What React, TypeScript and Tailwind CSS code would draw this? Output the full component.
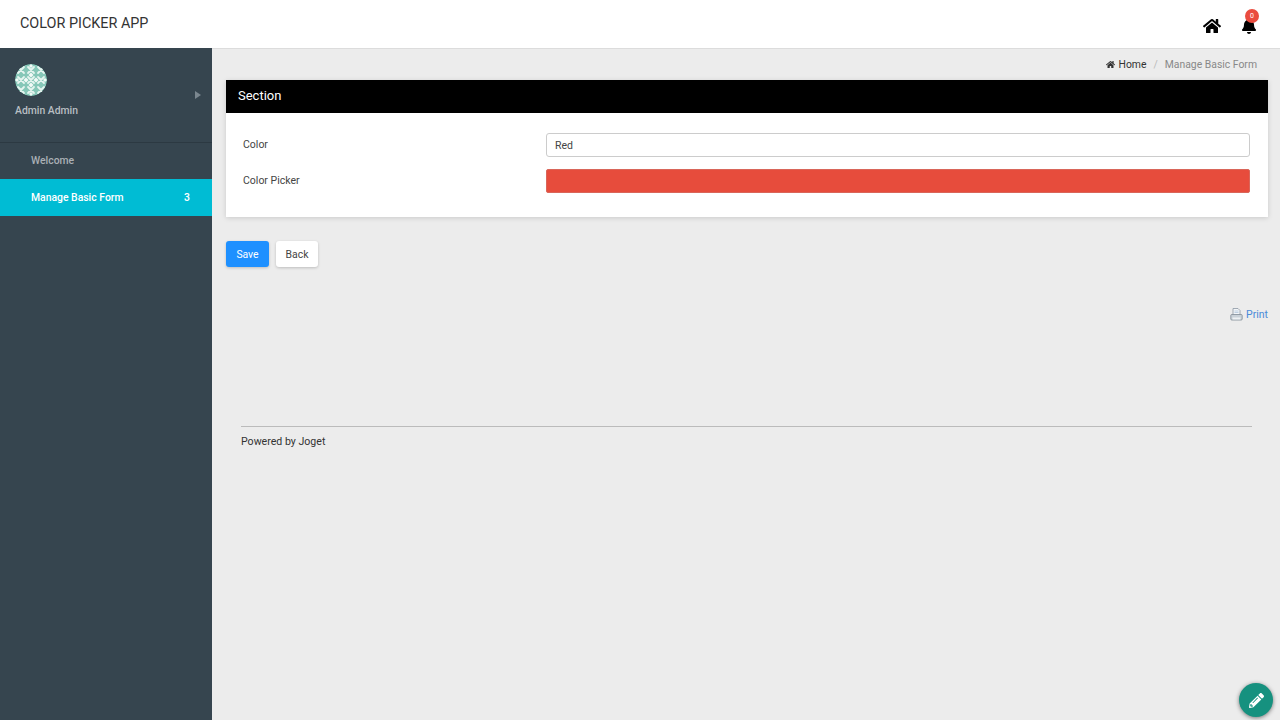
import { FaBell, FaHome, FaPencilAlt } from "react-icons/fa";

const tiles = [6, 16, 26];

const Avatar = () => (
  <svg width="32" height="32" viewBox="0 0 32 32" className="block rounded-full">
    <circle cx="16" cy="16" r="16" fill="#86c7b8" />
    {tiles.map((y) =>
      tiles.map((x) => (
        <g key={`${x}-${y}`} stroke="#e6f4f0" strokeWidth="1.8" strokeLinecap="round">
          <path d={`M${x - 3} ${y - 3}L${x + 3} ${y + 3}M${x + 3} ${y - 3}L${x - 3} ${y + 3}`} />
        </g>
      )),
    )}
    <g fill="#f2faf7">
      <path d="M16 8.500l2.500 2.500-2.500 2.500-2.500-2.500zM16 18.500l2.500 2.500-2.500 2.500-2.500-2.500zM8.500 16l2.500-2.500 2.500 2.500-2.500 2.500zM18.500 16l2.500-2.500 2.500 2.500-2.500 2.500z" />
      <path d="M16 0l2 2-2 2-2-2zM16 28l2 2-2 2-2-2zM0 16l2-2 2 2-2 2zM28 16l2-2 2 2-2 2z" />
    </g>
  </svg>
);

const PrintIcon = () => (
  <svg width="13" height="13" viewBox="0 0 13 13">
    <path d="M3 0.500h5l2 2v5H3z" fill="#f1f4f7" stroke="#8d98a3" strokeWidth="0.8" />
    <path d="M4.500 3h4M4.500 4.500h4" stroke="#a9c0d8" strokeWidth="0.7" />
    <rect x="0.800" y="6.500" width="11.400" height="5.500" rx="1" fill="#c9d1d8" stroke="#7f8a95" strokeWidth="0.8" />
    <rect x="2.500" y="9.500" width="8" height="2" fill="#eef1f4" />
  </svg>
);

const App = () => {
  return (
    <div className="flex h-[720px] flex-col overflow-hidden bg-[#ececec] font-['Roboto',sans-serif]">
      <header className="flex h-12 shrink-0 items-center justify-between bg-white pl-5 pr-[23px]">
        <span className="text-[14.4px] text-[#333]">COLOR PICKER APP</span>
        <div className="flex items-center gap-[20px] pt-1">
          <FaHome className="text-[18px] text-black" />
          <div className="relative">
            <FaBell className="text-[16px] text-black" />
            <span className="absolute -top-[9px] left-[4px] flex h-[14px] w-[14px] items-center justify-center rounded-full bg-[#ea4c3f] text-[7px] text-white">
              0
            </span>
          </div>
        </div>
      </header>

      <div className="flex min-h-0 flex-1">
        <aside className="w-[212px] shrink-0 bg-[#36454f]">
          <div className="flex h-[95px] items-center justify-between border-b border-[#2c3942] pl-[15px] pr-[11px]">
            <div className="flex flex-col self-start pt-[16px]">
              <Avatar />
              <span className="mt-[7px] text-[10.4px] font-medium text-[#b9bfc3]">Admin Admin</span>
            </div>
            <span className="h-0 w-0 border-y-[4px] border-l-[6px] border-y-transparent border-l-[#7b878f]" />
          </div>
          <div className="flex h-[36px] items-center pl-[31px] text-[10.4px] font-medium text-[#a9b0b5]">
            Welcome
          </div>
          <div className="flex h-[37px] items-center justify-between bg-[#00bcd4] pl-[31px] pr-[22px] pt-[1px] text-[10.4px] font-medium text-white">
            <span>Manage Basic Form</span>
            <span>3</span>
          </div>
        </aside>

        <main className="flex min-w-0 flex-1 flex-col border-t border-[#dcdcdc] pl-[14px] pr-[12px]">
          <nav className="flex h-[31px] items-center justify-end gap-[7px] pr-[11px] pt-[1px] text-[10.4px]">
            <span className="flex items-center gap-[3px] text-[#333]">
              <FaHome className="text-[9px]" />
              Home
            </span>
            <span className="text-[#bbb]">/</span>
            <span className="text-[#888]">Manage Basic Form</span>
          </nav>

          <section className="bg-white shadow-[0_1px_5px_rgba(0,0,0,0.15)]">
            <h2 className="flex h-[33px] items-center bg-black pb-[1px] pl-[12px] text-[13px] font-normal text-white">
              Section
            </h2>
            <div className="flex flex-col gap-[12px] pb-[24px] pl-[17px] pr-[18px] pt-[20px]">
              <div className="flex h-[24px] items-center">
                <label className="w-[303px] shrink-0 text-[10.5px] text-[#444]">Color</label>
                <div className="flex h-[24px] flex-1 items-center rounded-[3px] border border-[#ccc] pl-[8px] pt-[1px] text-[10.5px] text-[#444]">
                  Red
                </div>
              </div>
              <div className="flex h-[24px] items-center">
                <label className="w-[303px] shrink-0 text-[10.5px] text-[#444]">Color Picker</label>
                <div className="h-[24px] flex-1 rounded-[2px] border border-[#d9665a] bg-[#e74c3c]" />
              </div>
            </div>
          </section>

          <div className="mt-[24px] flex gap-[7px]">
            <button className="h-[26px] w-[43px] rounded-[3px] bg-[#1e90ff] pt-[1px] text-[10.4px] text-white shadow-[0_1px_3px_rgba(0,0,0,0.2)]">
              Save
            </button>
            <button className="h-[26px] w-[42px] rounded-[3px] bg-white pt-[1px] text-[10.4px] text-[#444] shadow-[0_1px_3px_rgba(0,0,0,0.2)]">
              Back
            </button>
          </div>

          <div className="mt-[40px] flex items-center justify-end gap-[3px] text-[10.5px] text-[#4a8ad8]">
            <PrintIcon />
            Print
          </div>

          <footer className="ml-[15px] mr-[16px] mt-[103px] border-t border-[#bbb] pt-[7px] text-[10.6px] text-[#333]">
            Powered by Joget
          </footer>
        </main>
      </div>

      <button className="fixed bottom-[3px] right-[7px] flex h-[34px] w-[34px] items-center justify-center rounded-full bg-[#16917f] text-white shadow-[0_1px_4px_rgba(0,0,0,0.5)]">
        <FaPencilAlt className="text-[15px]" />
      </button>
    </div>
  );
};

export default App;
